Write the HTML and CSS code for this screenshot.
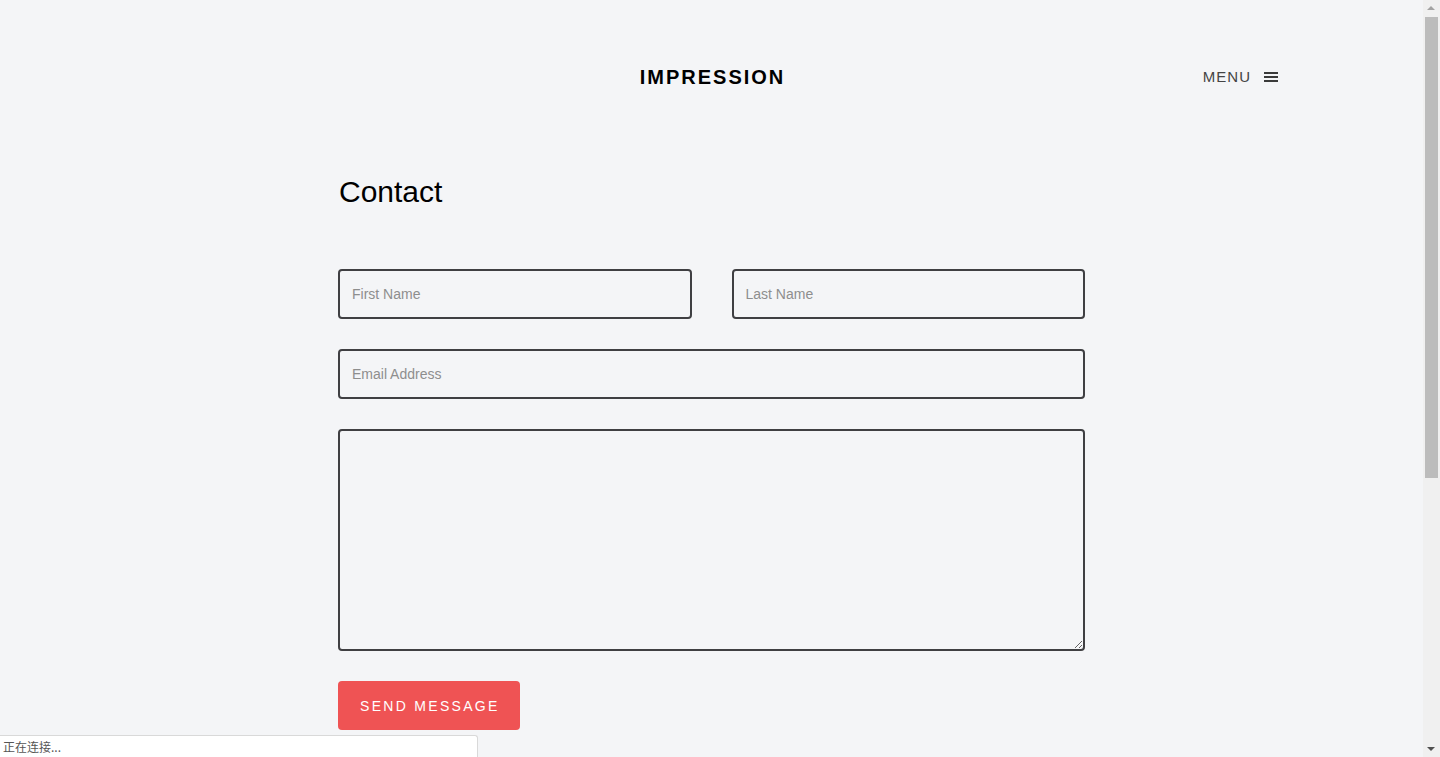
FILE: index.html
```html
<!DOCTYPE html>
<html lang="en">
<head>
<meta charset="utf-8">
<title>Contact - Impression</title>
<link rel="stylesheet" href="styles.css">
</head>
<body>
<div class="page">
  <header class="topbar">
    <div class="topbar-side"></div>
    <a class="logo" href="#">IMPRESSION</a>
    <div class="topbar-side topbar-right">
      <a class="menu" href="#">
        <span class="menu-label">MENU</span>
        <svg class="menu-icon" width="14" height="12" viewBox="0 0 14 12" aria-hidden="true">
          <rect x="0" y="1" width="14" height="2" fill="#3a3a3a"/>
          <rect x="0" y="5" width="14" height="2" fill="#3a3a3a"/>
          <rect x="0" y="9" width="14" height="2" fill="#3a3a3a"/>
        </svg>
      </a>
    </div>
  </header>

  <main class="container">
    <h1 class="title">Contact</h1>
    <form class="form">
      <div class="row two">
        <input class="field" type="text" placeholder="First Name">
        <input class="field" type="text" placeholder="Last Name">
      </div>
      <div class="row">
        <input class="field" type="email" placeholder="Email Address">
      </div>
      <div class="row">
        <textarea class="field area"></textarea>
      </div>
      <div class="row">
        <button class="send" type="button">SEND MESSAGE</button>
      </div>
    </form>
  </main>
</div>

<div class="scrollbar">
  <div class="sb-arrow sb-up"></div>
  <div class="sb-thumb"></div>
  <div class="sb-arrow sb-down"></div>
</div>

<div class="status">正在连接...</div>
</body>
</html>
```

FILE: styles.css
```css
html, body {
  margin: 0;
  padding: 0;
  height: 100%;
  overflow: hidden;
  background: #f4f5f7;
}

body {
  font-family: "Liberation Sans", Arial, sans-serif;
  color: #111;
}

.page {
  width: calc(100% - 17px);
}

.topbar {
  width: 1133px;
  margin: 0 auto;
  padding-top: 62px;
  height: 30px;
  display: grid;
  grid-template-columns: 1fr auto 1fr;
  align-items: center;
}

.logo {
  font-size: 20px;
  font-weight: bold;
  letter-spacing: 2px;
  color: #000;
  text-decoration: none;
  line-height: 30px;
  margin-right: -2px;
}

.topbar-right {
  display: flex;
  justify-content: flex-end;
}

.menu {
  display: flex;
  align-items: center;
  gap: 13px;
  text-decoration: none;
  color: #444;
}

.menu-label {
  font-size: 15px;
  letter-spacing: 1px;
  line-height: 30px;
}

.menu-icon {
  display: block;
  margin-top: 0;
}

.container {
  width: 747px;
  margin: 0 auto;
  padding-top: 82px;
}

.title {
  margin: 0 0 0 1px;
  font-size: 30px;
  font-weight: normal;
  line-height: 36px;
  color: #000;
}

.form {
  margin-top: 59px;
  display: flex;
  flex-direction: column;
  gap: 30px;
}

.row {
  display: flex;
}

.row.two {
  gap: 40px;
}

.field {
  box-sizing: border-box;
  flex: 1;
  height: 50px;
  border: 2px solid #3f3f42;
  border-radius: 4px;
  background: transparent;
  padding: 0 12px;
  font-family: "Liberation Sans", Arial, sans-serif;
  font-size: 14px;
  color: #333;
  outline: none;
  margin: 0;
}

.field::placeholder {
  color: #8e8e8e;
}

.area {
  height: 222px;
  resize: vertical;
  padding: 12px;
}

.send {
  height: 49px;
  padding: 0 20px 0 22px;
  border: none;
  border-radius: 4px;
  background: #ef5354;
  color: #fff;
  font-family: "Liberation Sans", Arial, sans-serif;
  font-size: 14px;
  letter-spacing: 2.3px;
  cursor: pointer;
}

.scrollbar {
  position: fixed;
  top: 0;
  right: 0;
  width: 17px;
  height: 100%;
  background: #f0f0f0;
}

.sb-thumb {
  position: absolute;
  left: 2px;
  width: 13px;
  top: 17px;
  height: 461px;
  background: #bcbcbc;
}

.sb-arrow {
  position: absolute;
  left: 4px;
  width: 0;
  height: 0;
  border-left: 4px solid transparent;
  border-right: 4px solid transparent;
}

.sb-up {
  top: 6px;
  border-bottom: 4px solid #a3a3a3;
}

.sb-down {
  bottom: 6px;
  border-top: 4px solid #505050;
}

.status {
  position: fixed;
  left: 0;
  bottom: 0;
  width: 474px;
  height: 21px;
  background: #fff;
  border-top: 1px solid #d9d9d9;
  border-right: 1px solid #d9d9d9;
  border-top-right-radius: 3px;
  font-family: "Noto Sans CJK SC", "Liberation Sans", sans-serif;
  font-size: 12px;
  line-height: 21px;
  color: #555;
  padding-left: 3px;
}
```
